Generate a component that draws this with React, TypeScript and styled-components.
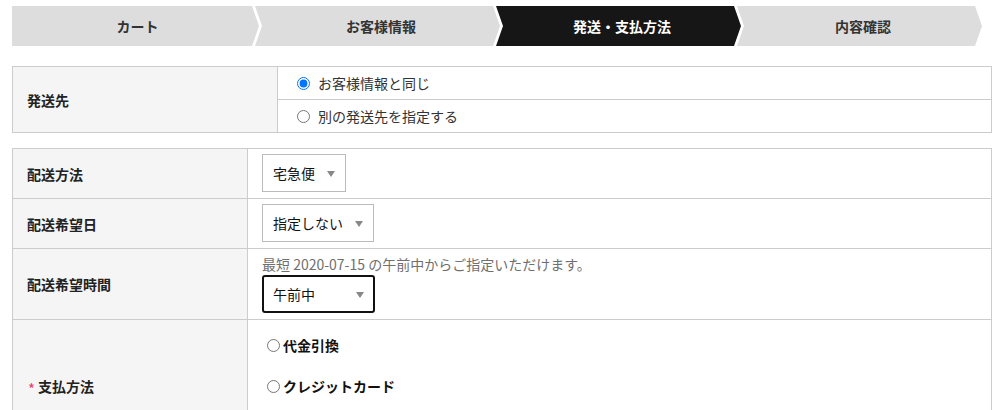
import React from "react";
import styled, { createGlobalStyle } from "styled-components";

const GlobalStyle = createGlobalStyle`
  html, body {
    margin: 0;
    padding: 0;
    background: #fff;
  }
  body {
    font-family: "Noto Sans CJK JP", "Noto Sans", sans-serif;
    font-size: 14px;
    color: #222;
  }
  * {
    box-sizing: border-box;
  }
`;

const Page = styled.div`
  width: 992px;
  padding: 6px 0 0 12px;
`;

const Steps = styled.ol`
  display: flex;
  height: 40px;
  margin: 0 0 20px;
  padding: 0;
  list-style: none;
`;

const Step = styled.li<{ $active?: boolean; $first?: boolean }>`
  flex: none;
  width: ${(p) => (p.$first ? "247px" : "245px")};
  display: flex;
  align-items: center;
  justify-content: center;
  margin-left: ${(p) => (p.$first ? "0" : "-4px")};
  padding-left: ${(p) => (p.$first ? "4px" : "7px")};
  background: ${(p) => (p.$active ? "#161616" : "#dddddd")};
  color: ${(p) => (p.$active ? "#fff" : "#333")};
  font-weight: bold;
  font-size: 14px;
  line-height: 20px;
  clip-path: ${(p) =>
    p.$first
      ? "polygon(0 0, calc(100% - 7px) 0, 100% 50%, calc(100% - 7px) 100%, 0 100%)"
      : "polygon(0 0, calc(100% - 7px) 0, 100% 50%, calc(100% - 7px) 100%, 0 100%, 7px 50%)"};
`;

const Table = styled.div<{ $label: number }>`
  display: grid;
  width: 980px;
  grid-template-columns: ${(p) => p.$label}px 1fr;
  border: 1px solid #cccccc;
  margin-bottom: 15px;
`;

const Label = styled.div<{ $last?: boolean }>`
  display: flex;
  align-items: center;
  padding: 0 14px;
  background: #f5f5f5;
  border-right: 1px solid #cccccc;
  border-bottom: ${(p) => (p.$last ? "none" : "1px solid #cccccc")};
  font-weight: bold;
  font-size: 14px;
  color: #222;
`;

const Required = styled.span`
  color: #ec3a6e;
  font-size: 15px;
  font-weight: normal;
  line-height: 1;
  margin: 5px 3px 0 1px;
`;

const Cell = styled.div<{ $last?: boolean }>`
  padding: 5px 14px 6px;
  border-bottom: ${(p) => (p.$last ? "none" : "1px solid #cccccc")};
`;

const Options = styled.div`
  display: flex;
  flex-direction: column;
`;

const OptionRow = styled.label<{ $last?: boolean }>`
  display: flex;
  align-items: center;
  height: ${(p) => (p.$last ? "32px" : "33px")};
  padding: 0 14px;
  border-bottom: ${(p) => (p.$last ? "none" : "1px solid #cccccc")};
  font-size: 14px;
  color: #333;
  gap: 5px;
  input {
    margin: 0 3px 0 5px;
  }
`;

const SelectWrap = styled.div<{ $focused?: boolean; $width?: number }>`
  position: relative;
  display: inline-block;
  vertical-align: top;
  select {
    appearance: none;
    -webkit-appearance: none;
    display: block;
    height: 38px;
    width: ${(p) => (p.$width ? `${p.$width}px` : "auto")};
    padding: 0 30px 0 ${(p) => (p.$focused ? "9px" : "10px")};
    font-family: inherit;
    font-size: 14px;
    color: #111;
    background: #fff;
    border: ${(p) => (p.$focused ? "2px solid #111" : "1px solid #bbbbbb")};
    border-radius: ${(p) => (p.$focused ? "3px" : "0")};
    outline: none;
  }
  &::after {
    content: "";
    position: absolute;
    right: 11px;
    top: 17px;
    border-left: 4px solid transparent;
    border-right: 4px solid transparent;
    border-top: 6px solid #888;
    pointer-events: none;
  }
`;

const Hint = styled.div`
  line-height: 20px;
  color: #6f6f6f;
  font-size: 14px;
  margin-bottom: 1px;
`;

const PayCell = styled.div`
  padding: 15px 14px 55px;
  display: flex;
  flex-direction: column;
  gap: 21px;
`;

const PayOption = styled.label`
  display: flex;
  align-items: center;
  height: 20px;
  font-weight: bold;
  font-size: 14px;
  color: #111;
  input {
    margin: 0 3px 0 5px;
  }
`;

const steps = ["カート", "お客様情報", "発送・支払方法", "内容確認"];

export default function App() {
  return (
    <>
      <GlobalStyle />
      <Page>
        <Steps>
          {steps.map((s, i) => (
            <Step key={s} $first={i === 0} $active={i === 2}>
              {s}
            </Step>
          ))}
        </Steps>

        <Table $label={265}>
          <Label $last>発送先</Label>
          <Options>
            <OptionRow>
              <input type="radio" name="dest" defaultChecked />
              お客様情報と同じ
            </OptionRow>
            <OptionRow $last>
              <input type="radio" name="dest" />
              別の発送先を指定する
            </OptionRow>
          </Options>
        </Table>

        <Table $label={235}>
          <Label>配送方法</Label>
          <Cell>
            <SelectWrap>
              <select defaultValue="宅急便">
                <option>宅急便</option>
              </select>
            </SelectWrap>
          </Cell>

          <Label>配送希望日</Label>
          <Cell>
            <SelectWrap>
              <select defaultValue="指定しない">
                <option>指定しない</option>
              </select>
            </SelectWrap>
          </Cell>

          <Label>配送希望時間</Label>
          <Cell>
            <Hint>最短 2020-07-15 の午前中からご指定いただけます。</Hint>
            <SelectWrap $focused $width={113}>
              <select defaultValue="午前中">
                <option>午前中</option>
              </select>
            </SelectWrap>
          </Cell>

          <Label $last>
            <Required>*</Required>支払方法
          </Label>
          <PayCell>
            <PayOption>
              <input type="radio" name="pay" />
              代金引換
            </PayOption>
            <PayOption>
              <input type="radio" name="pay" />
              クレジットカード
            </PayOption>
          </PayCell>
        </Table>
      </Page>
    </>
  );
}
